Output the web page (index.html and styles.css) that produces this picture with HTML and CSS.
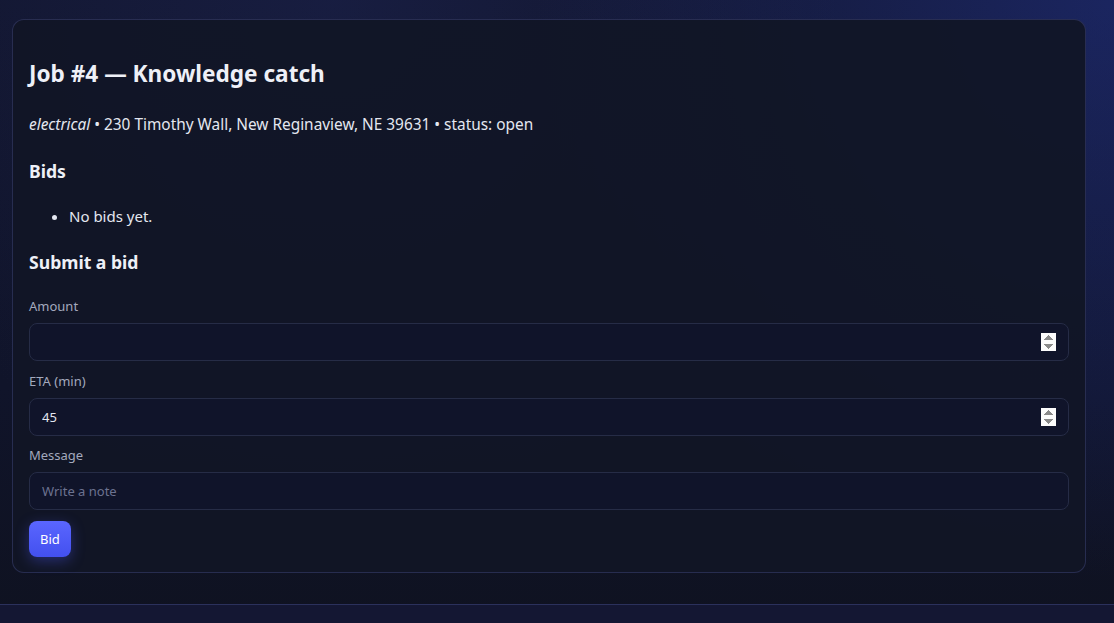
FILE: index.html
```html
<!DOCTYPE html>
<html lang="en">
<head>
    <meta charset="UTF-8">
    <meta name="viewport" content="width=device-width, initial-scale=1.0">
    <title>Job #4</title>
    <link rel="stylesheet" href="styles.css">
</head>
<body>
    <main class="page">
        <section class="card">
            <h1>Job #4 — Knowledge catch</h1>
            <p class="meta"><em>electrical</em> • 230 Timothy Wall, New Reginaview, NE 39631 • status: open</p>

            <h2>Bids</h2>
            <ul class="bids">
                <li>No bids yet.</li>
            </ul>

            <h2>Submit a bid</h2>
            <form class="bid-form" onsubmit="return false;">
                <label class="field">
                    <span>Amount</span>
                    <input type="number" name="amount">
                </label>
                <label class="field">
                    <span>ETA (min)</span>
                    <input type="number" name="eta" value="45">
                </label>
                <label class="field">
                    <span>Message</span>
                    <input type="text" name="message" placeholder="Write a note">
                </label>
                <div>
                    <button type="submit" class="btn">Bid</button>
                </div>
            </form>
        </section>
    </main>
    <footer class="footer"></footer>
</body>
</html>
```

FILE: styles.css
```css
html {
    background: #0f1220;
}

body {
    margin: 0;
    font-family: "Noto Sans", system-ui, sans-serif;
    color: #e4e7f0;
    min-height: 623px;
    background:
        radial-gradient(circle at 100% 0%, rgba(40, 60, 170, 0.4), transparent 45%),
        radial-gradient(circle at 30% 0%, rgba(40, 50, 120, 0.25), transparent 50%),
        linear-gradient(180deg, #12162e 0%, #10142a 60%, #0f1220 100%);
}

.page {
    padding: 19px 28px 31px 12px;
}

.card {
    background: rgba(17, 21, 38, 0.93);
    border: 1px solid rgba(99, 108, 190, 0.28);
    border-radius: 12px;
    padding: 16px 16px 15px;
}

h1 {
    font-size: 22.6px;
    line-height: 28px;
    font-weight: 700;
    color: #eef0f7;
    margin: 24px 0 26px;
}

.meta {
    font-size: 15.4px;
    line-height: 22px;
    margin: 0 0 23px;
}

h2 {
    font-size: 17.6px;
    line-height: 24px;
    font-weight: 700;
    color: #eef0f7;
    margin: 0 0 22px;
}

.bids {
    font-size: 15px;
    line-height: 22px;
    margin: 0 0 23px;
    padding-left: 40px;
}

.bid-form {
    display: flex;
    flex-direction: column;
    gap: 10.5px;
    padding-top: 1px;
}

.field {
    display: flex;
    flex-direction: column;
    gap: 8px;
    font-size: 13px;
    line-height: 18px;
    color: #a3a9bd;
}

.field input {
    height: 38px;
    box-sizing: border-box;
    padding: 0 12px;
    border: 1px solid #262c46;
    border-radius: 8px;
    background: #10142a;
    color: #e4e7f0;
    font-family: inherit;
    font-size: 13px;
    outline: none;
}

.field input::placeholder {
    color: #6c7290;
}

.field input::-webkit-inner-spin-button {
    opacity: 1;
}

.btn {
    height: 36px;
    padding: 0 11px;
    border: none;
    border-radius: 8px;
    background: linear-gradient(180deg, #5a66ff, #4350ef);
    color: #fff;
    font-family: inherit;
    font-size: 13px;
    cursor: pointer;
    box-shadow: 0 4px 14px rgba(79, 93, 255, 0.35);
}

.footer {
    border-top: 1px solid rgba(99, 108, 190, 0.3);
    background: #141733;
    height: 40px;
}
```
